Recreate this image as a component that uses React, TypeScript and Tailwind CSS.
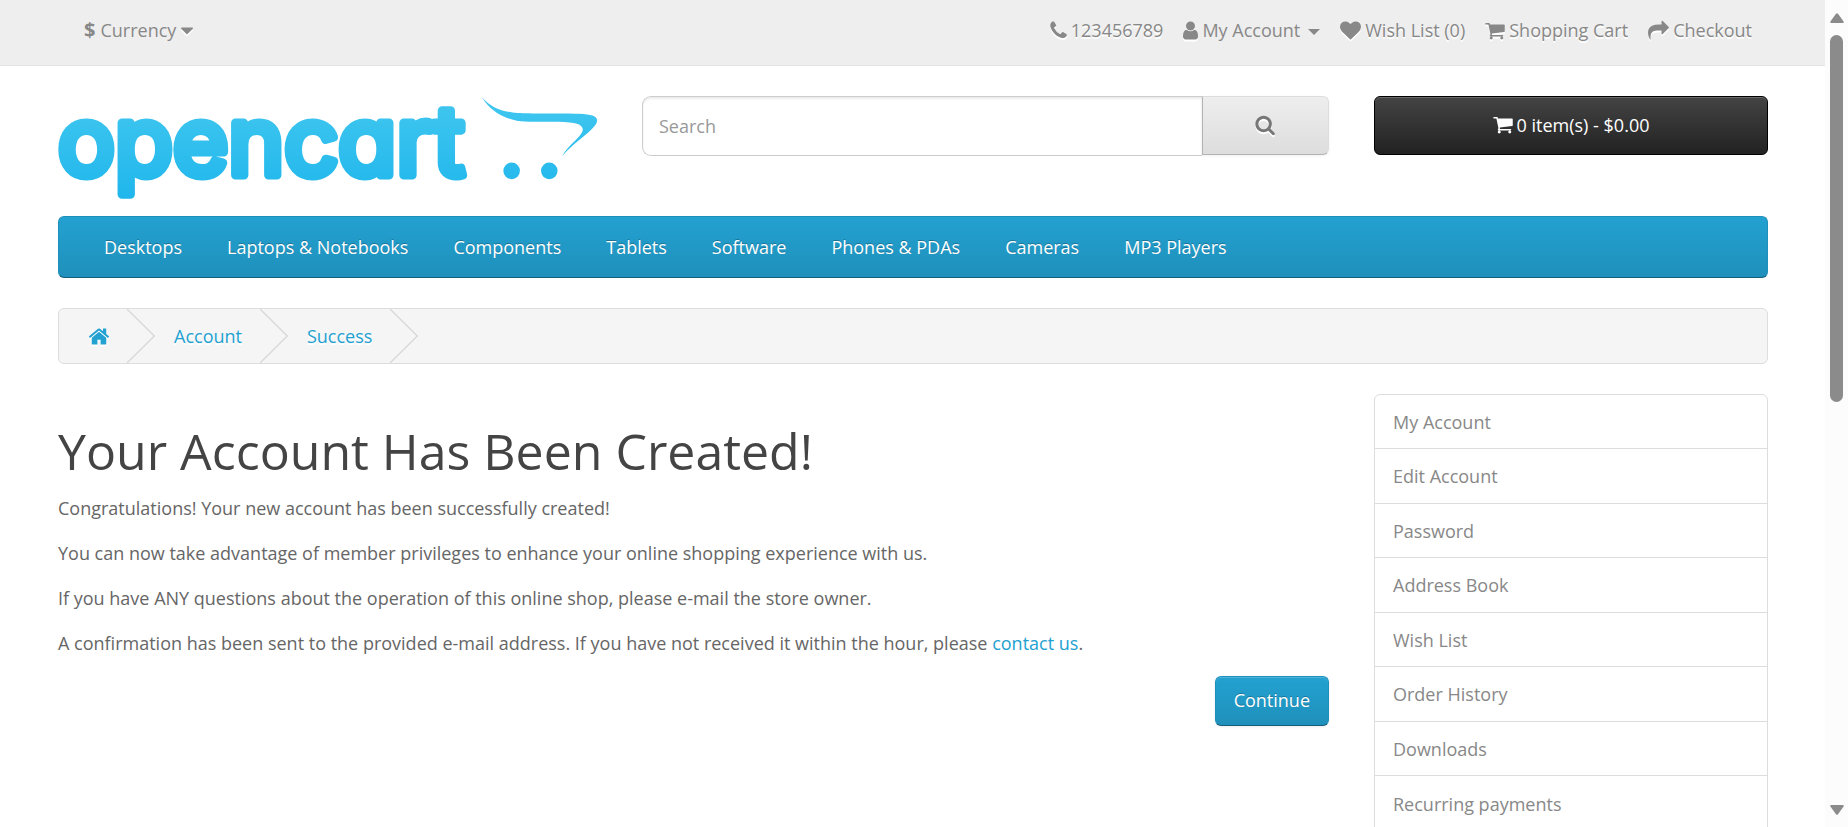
import React from "react";

type IconShape = { box: string; size: string; d: string };

const icons: Record<string, IconShape> = {
  phone: {
    box: "192 0 1408 1792",
    size: "h-[21px] w-[17px]",
    d: "M1600 1240q0 27-10 70.5t-21 68.5q-21 50-122 106-94 51-186 51-27 0-53-3.5t-57.5-12.5-47-14.5-55.5-20.5-49-18q-98-35-175-83-127-79-264-216t-216-264q-48-77-83-175-3-9-18-49t-20.5-55.5-14.5-47-12.5-57.5-3.5-53q0-92 51-186 56-101 106-122 25-11 68.5-21t70.5-10q14 0 21 3 18 6 53 76 11 19 30 54t35 63.5 31 53.5q3 4 17.5 25t21.5 35.5 7 28.5q0 20-28.5 50t-62 55-62 53-28.5 46q0 9 5 22.5t8.5 20.5 14 24 11.5 19q76 137 174 235t235 174q2 1 19 11.5t24 14 20.5 8.5 22.5 5q18 0 46-28.5t53-62 55-62 50-28.5q14 0 28.5 7t35.5 21.5 25 17.5q25 15 53.5 31t63.5 35 54 30q70 35 76 53 3 7 3 21z",
  },
  user: {
    box: "256 0 1280 1792",
    size: "h-[21px] w-[15px]",
    d: "M1536 1399q0 109-62.5 187t-150.5 78h-854q-88 0-150.5-78t-62.5-187q0-85 8.5-160.5t31.5-152 58.5-131 94-89 134.5-34.5q131 128 313 128t313-128q76 0 134.5 34.5t94 89 58.5 131 31.5 152 8.5 160.5zm-256-887q0 159-112.5 271.5t-271.5 112.5-271.5-112.5-112.5-271.5 112.5-271.5 271.5-112.5 271.5 112.5 112.5 271.5z",
  },
  heart: {
    box: "0 0 1792 1792",
    size: "h-[21px] w-[21px]",
    d: "M896 1664q-26 0-44-18l-624-602q-10-8-27.5-26t-55.5-65.5-68-97.5-53.5-121-23.5-138q0-220 127-344t351-124q62 0 126.5 21.5t120 58 95.5 68.5 76 68q36-36 76-68t95.5-68.5 120-58 126.5-21.5q224 0 351 124t127 344q0 221-229 450l-623 600q-18 18-44 18z",
  },
  cart: {
    box: "64 0 1664 1792",
    size: "h-[21px] w-[20px]",
    d: "M704 1536q0 52-38 90t-90 38-90-38-38-90 38-90 90-38 90 38 38 90zm896 0q0 52-38 90t-90 38-90-38-38-90 38-90 90-38 90 38 38 90zm128-1088v512q0 24-16.5 42.5t-40.5 21.5l-1044 122q13 60 13 70 0 16-24 64h920q26 0 45 19t19 45-19 45-45 19h-1024q-26 0-45-19t-19-45q0-11 8-31.5t16-36 21.5-40 15.5-29.5l-177-823h-204q-26 0-45-19t-19-45 19-45 45-19h256q16 0 28.5 6.5t19.5 15.5 13 24.5 8 26 5.5 29.5 4.5 26h1201q26 0 45 19t19 45z",
  },
  share: {
    box: "0 0 1792 1792",
    size: "h-[21px] w-[21px]",
    d: "M1792 640q0 26-19 45l-512 512q-19 19-45 19t-45-19-19-45v-256h-224q-98 0-175.5 6t-154 21.5-133 42.5-105.5 69.5-80 101-48.5 138.5-17.5 181q0 55 5 123 0 6 2.5 23.5t2.5 26.5q0 15-8.5 25t-23.5 10q-16 0-28-17-7-9-13-22t-13.5-30-10.5-24q-127-285-127-451 0-199 53-333 162-403 875-403h224v-256q0-26 19-45t45-19 45 19l512 512q19 19 19 45z",
  },
  search: {
    box: "64 64 1728 1792",
    size: "h-[21px] w-[21px]",
    d: "M1216 832q0-185-131.5-316.5t-316.5-131.5-316.5 131.5-131.5 316.5 131.5 316.5 316.5 131.5 316.5-131.5 131.5-316.5zm512 832q0 52-38 90t-90 38q-54 0-90-38l-343-342q-179 124-399 124-143 0-273.5-55.5t-225-150-150-225-55.5-273.5 55.5-273.5 150-225 225-150 273.5-55.5 273.5 55.5 225 150 150 225 55.5 273.5q0 220-124 399l343 343q37 37 37 90z",
  },
  home: {
    box: "96 0 1600 1792",
    size: "h-[23px] w-[20px]",
    d: "M1472 992v480q0 26-19 45t-45 19h-384v-384h-256v384h-384q-26 0-45-19t-19-45v-480q0-1 .5-3t.5-3l575-474 575 474q1 2 1 6zm223-69l-62 74q-8 9-21 11h-3q-13 0-21-7l-692-577-692 577q-12 8-24 7-13-2-21-11l-62-74q-8-10-7-23.5t11-21.5l719-599q32-26 76-26t76 26l244 204v-195q0-14 9-23t23-9h192q14 0 23 9t9 23v408l219 182q10 8 11 21.5t-7 23.5z",
  },
  caret: {
    box: "384 0 1024 1792",
    size: "h-[21px] w-[12px]",
    d: "M1408 704q0 26-19 45l-448 448q-19 19-45 19t-45-19l-448-448q-19-19-19-45t19-45 45-19h896q26 0 45 19t19 45z",
  },
};

function Icon({ name, className = "" }: { name: string; className?: string }) {
  const icon = icons[name];
  return (
    <svg
      viewBox={icon.box}
      fill="currentColor"
      aria-hidden="true"
      className={`shrink-0 ${icon.size} ${className}`}
    >
      <path d={icon.d} />
    </svg>
  );
}

const glow = "drop-shadow-[0_2px_0_#fff]";

function TopLink({ icon, label }: { icon: string; label: string }) {
  return (
    <a href="#" className="flex items-center gap-1">
      <Icon name={icon} className={glow} />
      {label}
    </a>
  );
}

function TopBar() {
  return (
    <nav
      aria-label="Top"
      className="flex h-[66px] items-center justify-between border-b border-[#e2e2e2] bg-[#eee] pr-[73px] pb-[5px] pl-[84px] text-[#888] [text-shadow:0_2px_0_#fff]"
    >
      <button type="button" className="flex items-center gap-[5px]">
        <strong className="text-[20px]">$</strong>
        Currency
        <Icon name="caret" className={glow} />
      </button>
      <div className="flex items-center gap-5">
        <TopLink icon="phone" label="123456789" />
        <button type="button" className="flex items-center gap-1">
          <Icon name="user" className={glow} />
          My Account
          <svg viewBox="0 0 12 6" fill="currentColor" aria-hidden="true" className="mt-1 ml-1 h-[6px] w-[12px]">
            <path d="M0 0h12L6 6z" />
          </svg>
        </button>
        <TopLink icon="heart" label="Wish List (0)" />
        <TopLink icon="cart" label="Shopping Cart" />
        <TopLink icon="share" label="Checkout" />
      </div>
    </nav>
  );
}

function Logo() {
  return (
    <a href="#" aria-label="opencart" className="block">
      <svg viewBox="0 0 540 106" className="block w-full overflow-visible">
        <defs>
          <linearGradient id="sky" gradientUnits="userSpaceOnUse" x1="0" y1="0" x2="0" y2="106">
            <stop offset="0" stopColor="#41c7ef" />
            <stop offset="1" stopColor="#1fb6ec" />
          </linearGradient>
        </defs>
        <text
          x="0"
          y="79"
          fill="url(#sky)"
          stroke="url(#sky)"
          strokeWidth="9"
          strokeLinejoin="round"
          className="font-['Inter',sans-serif] text-[95px] font-normal [font-feature-settings:'cv11']"
        >
          opencart
        </text>
        <g fill="url(#sky)">
          <path d="M424.5 1C430 7 436 12 446 14.7C459 18 473 17.3 506 17.6C523 17.8 533 18 537.5 20.5C541 22.5 540.8 26 538 29.5C530 39.5 514 49 505.3 60C509 52 520 44 524.7 37C527.5 32.5 524.5 28.5 518 27.3C508 25.2 496 25.8 486 25.7C476 25.6 467 26 459.7 24.7C443 21.5 432 13 424.5 1Z" />
          <circle cx="454.5" cy="75" r="8.3" />
          <circle cx="492.2" cy="75" r="8.3" />
        </g>
      </svg>
    </a>
  );
}

function Header() {
  return (
    <header className="grid h-[120px] grid-cols-[539fr_687fr_394fr] items-start gap-[45px]">
      <Logo />
      <form className="flex items-start" onSubmit={(e) => e.preventDefault()}>
        <input
          type="text"
          aria-label="Search"
          placeholder="Search"
          className="h-[60px] min-w-0 flex-1 rounded-l-[9px] border border-r-0 border-[#ccc] bg-white px-4 text-[#555] shadow-[inset_0_2px_2px_rgba(0,0,0,0.075)] outline-none placeholder:text-[#999]"
        />
        <button
          type="submit"
          aria-label="Submit search"
          className="flex h-[59px] w-[127px] items-center justify-center rounded-r-[6px] border border-[#ddd] border-b-[#b3b3b3] border-l-[#b3b3b3] bg-linear-to-b from-[#eee] to-[#ddd] text-[#777] shadow-[0_1px_3px_rgba(0,0,0,0.06)]"
        >
          <Icon name="search" className={glow} />
        </button>
      </form>
      <button
        type="button"
        className="flex h-[59px] items-center justify-center gap-1 rounded-[6px] border border-black bg-linear-to-b from-[#444] to-[#222] pb-[2px] text-white shadow-[inset_0_1px_0_rgba(255,255,255,0.2)]"
      >
        <Icon name="cart" />0 item(s) - $0.00
      </button>
    </header>
  );
}

const categories = [
  "Desktops",
  "Laptops & Notebooks",
  "Components",
  "Tablets",
  "Software",
  "Phones & PDAs",
  "Cameras",
  "MP3 Players",
];

function Menu() {
  return (
    <nav
      aria-label="Categories"
      className="flex h-[62px] items-center gap-[45px] rounded-[6px] border border-[#1f90bb] border-b-[#145e7a] bg-linear-to-b from-[#23a1d1] to-[#1f90bb] px-[45px] text-white [text-shadow:0_-1px_0_rgba(0,0,0,0.25)]"
    >
      {categories.map((name) => (
        <a key={name} href="#">
          {name}
        </a>
      ))}
    </nav>
  );
}

function Chevron() {
  return (
    <svg viewBox="0 0 28 54" fill="none" stroke="#d8d8d8" aria-hidden="true" className="h-[54px] w-[28px]">
      <path d="M0 0L27.3 27L0 54" strokeWidth="1.3" />
    </svg>
  );
}

function Breadcrumb() {
  return (
    <nav
      aria-label="Breadcrumb"
      className="mt-[30px] flex h-[56px] items-center gap-[18px] rounded-[6px] border border-[#ddd] bg-[#f5f5f5] pl-[30px] text-[#23a1d1] [text-shadow:0_2px_0_#fff]"
    >
      <a href="#" aria-label="Home">
        <Icon name="home" className={glow} />
      </a>
      <Chevron />
      <a href="#" className="pl-px">
        Account
      </a>
      <Chevron />
      <a href="#" className="pl-px">
        Success
      </a>
      <Chevron />
    </nav>
  );
}

const accountLinks = [
  "My Account",
  "Edit Account",
  "Password",
  "Address Book",
  "Wish List",
  "Order History",
  "Downloads",
  "Recurring payments",
];

function AccountList() {
  return (
    <aside className="rounded-t-[6px] border border-[#ddd]">
      {accountLinks.map((name) => (
        <a
          key={name}
          href="#"
          className="flex items-center border-b border-[#ddd] pl-[18px] text-[#888] last:border-b-0 odd:h-[54px] even:h-[55px]"
        >
          {name}
        </a>
      ))}
    </aside>
  );
}

function Message() {
  return (
    <main className="pt-[30px]">
      <h1 className="mb-[15px] text-[50px] leading-[54px] text-[#444]">Your Account Has Been Created!</h1>
      <div className="flex flex-col gap-[15px]">
        <p>Congratulations! Your new account has been successfully created!</p>
        <p>You can now take advantage of member privileges to enhance your online shopping experience with us.</p>
        <p>If you have ANY questions about the operation of this online shop, please e-mail the store owner.</p>
        <p>
          A confirmation has been sent to the provided e-mail address. If you have not received it within the hour,
          please{" "}
          <a href="#" className="text-[#23a1d1]">
            contact us
          </a>
          .
        </p>
      </div>
      <div className="mt-[18px] flex justify-end">
        <a
          href="#"
          className="flex h-[50px] items-center rounded-[6px] border border-[#1f90bb] border-b-[#145e7a] bg-linear-to-b from-[#23a1d1] to-[#1f90bb] px-[18px] pb-[2px] text-white shadow-[inset_0_1px_0_rgba(255,255,255,0.2),0_1px_3px_rgba(0,0,0,0.08)] [text-shadow:0_-1px_0_rgba(0,0,0,0.25)]"
        >
          Continue
        </a>
      </div>
    </main>
  );
}

function ScrollBar() {
  return (
    <div aria-hidden="true" className="flex w-[23px] shrink-0 flex-col items-center bg-[#fcfcfc] pt-[13px] pb-[12px]">
      <svg viewBox="0 0 14 10" className="h-[10px] w-[14px]" fill="#8b8b8b">
        <path d="M6 .8Q7-.5 8 .8L13.6 8.5Q14.2 10 12.8 10H1.2Q-.2 10 .4 8.5z" />
      </svg>
      <div className="mt-3 min-h-0 flex-1">
        <div className="h-[367px] w-[13px] rounded-full bg-[#8b8b8b]" />
      </div>
      <svg viewBox="0 0 14 10" className="h-[10px] w-[14px]" fill="#8b8b8b">
        <path d="M6 9.2Q7 10.5 8 9.2L13.6 1.5Q14.2 0 12.8 0H1.2Q-.2 0 .4 1.5z" />
      </svg>
    </div>
  );
}

export default function App() {
  return (
    <div className="flex h-screen overflow-hidden bg-white font-['Open_Sans',sans-serif] text-[18px] leading-[30px] text-[#666]">
      <div className="min-w-0 flex-1">
        <TopBar />
        <div className="pt-[30px] pr-[57px] pl-[58px]">
          <Header />
          <Menu />
          <Breadcrumb />
          <div className="mt-[30px] grid grid-cols-[1271fr_394fr] items-start gap-[45px]">
            <Message />
            <AccountList />
          </div>
        </div>
      </div>
      <ScrollBar />
    </div>
  );
}
